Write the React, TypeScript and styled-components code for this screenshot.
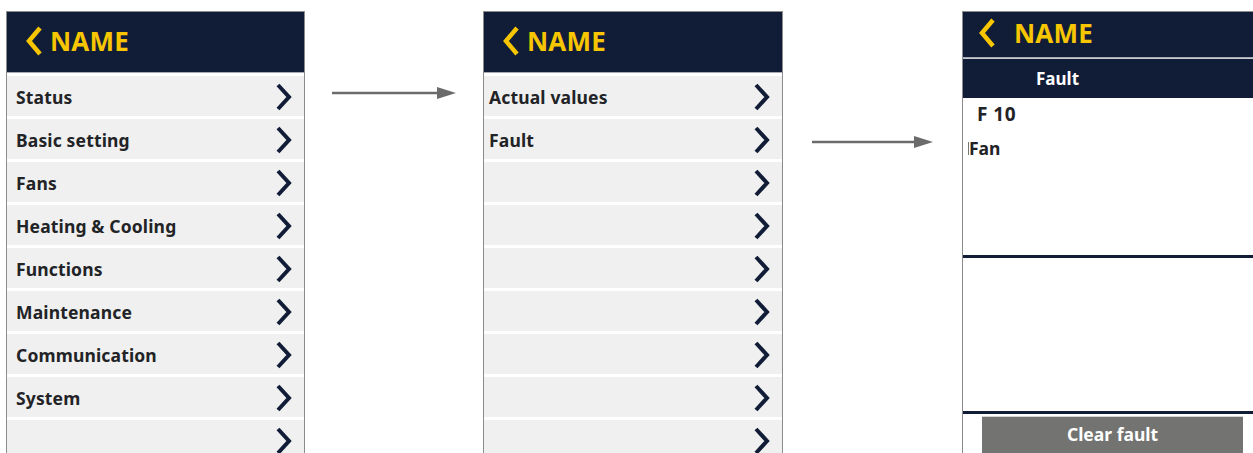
import React from "react";
import styled, { createGlobalStyle } from "styled-components";

const NAVY = "#111d37";
const YELLOW = "#f7c600";

const GlobalStyle = createGlobalStyle`
  body {
    margin: 0;
    background: #ffffff;
    font-family: "Noto Sans", "Open Sans", sans-serif;
    overflow: hidden;
  }
`;

const Page = styled.div`
  display: flex;
  align-items: flex-start;
  padding: 11px 0 0 6px;
  height: 453px;
  overflow: hidden;
  width: 1253px;
  box-sizing: border-box;
`;

const Panel = styled.div<{ $width: number }>`
  flex: none;
  width: ${(p) => p.$width}px;
  height: 442px;
  box-sizing: border-box;
  border: 1px solid #8c8c8c;
  border-bottom: none;
  display: flex;
  flex-direction: column;
  overflow: hidden;
`;

const Header = styled.div<{ $height: number; $gap: number; $pad: number }>`
  height: ${(p) => p.$height}px;
  flex: none;
  background: ${NAVY};
  display: flex;
  align-items: center;
  column-gap: ${(p) => p.$gap}px;
  padding-left: ${(p) => p.$pad}px;
  padding-bottom: 3px;
  box-sizing: border-box;
  border-bottom: 1px solid #a5aab3;
`;

const Title = styled.span`
  color: ${YELLOW};
  font-size: 26px;
  font-weight: 700;
  letter-spacing: 0.2px;
  line-height: 1;
`;

const List = styled.div`
  display: flex;
  flex-direction: column;
`;

const Row = styled.div<{ $pad: number }>`
  height: 40px;
  margin-top: 3px;
  flex: none;
  background: #eff0ef;
  display: flex;
  align-items: center;
  justify-content: space-between;
  padding: 2px 12px 0 ${(p) => p.$pad}px;
  box-sizing: border-box;
`;

const RowLabel = styled.span`
  font-size: 17.5px;
  font-weight: 700;
  letter-spacing: 0.15px;
  color: #222326;
`;

const ArrowCol = styled.div<{ $width: number; $top: number; $left: number; $len: number }>`
  flex: none;
  width: ${(p) => p.$width}px;
  padding-left: ${(p) => p.$left}px;
  margin-top: ${(p) => p.$top}px;
  box-sizing: border-box;
  display: flex;
  svg {
    width: ${(p) => p.$len}px;
    height: 12px;
  }
`;

const SubBar = styled.div`
  height: 40px;
  flex: none;
  background: ${NAVY};
  border-top: 1px solid #c8ccd2;
  color: #ffffff;
  font-size: 17px;
  font-weight: 700;
  display: flex;
  align-items: center;
  padding-left: 73px;
  box-sizing: border-box;
`;

const FaultBody = styled.div`
  height: 157px;
  flex: none;
  padding: 3px 0 0 5px;
  box-sizing: border-box;
  display: flex;
  flex-direction: column;
  row-gap: 9px;
`;

const FaultCode = styled.div`
  font-size: 19px;
  font-weight: 700;
  color: #222326;
  padding-left: 9px;
  letter-spacing: 0.5px;
`;

const FaultName = styled.div`
  font-size: 17.5px;
  font-weight: 700;
  color: #222326;
  display: flex;
  align-items: center;
  &::before {
    content: "";
    width: 1px;
    height: 13px;
    background: #777;
  }
`;

const Divider = styled.div`
  height: 3px;
  flex: none;
  background: ${NAVY};
`;

const Blank = styled.div`
  height: 153px;
  flex: none;
`;

const ClearButton = styled.button`
  margin: 2px 0 0 19px;
  width: 261px;
  height: 40px;
  flex: none;
  border: none;
  border-top: 1px solid #d5d5d5;
  background: #737471;
  color: #ffffff;
  font-family: "Noto Sans", sans-serif;
  font-size: 17.5px;
  font-weight: 700;
  padding: 0 0 5px;
`;

const BackIcon = () => (
  <svg width="18" height="30" viewBox="0 0 18 30">
    <polyline
      points="15,2 4,15 15,28"
      fill="none"
      stroke={YELLOW}
      strokeWidth="4.5"
      strokeLinejoin="miter"
    />
  </svg>
);

const NextIcon = () => (
  <svg width="16" height="28" viewBox="0 0 16 28">
    <polyline
      points="2,2 13,14 2,26"
      fill="none"
      stroke={NAVY}
      strokeWidth="4"
      strokeLinejoin="miter"
    />
  </svg>
);

const Arrow = ({ len }: { len: number }) => (
  <svg viewBox={`0 0 ${len} 12`}>
    <line x1="0" y1="6" x2={len - 18} y2="6" stroke="#6b6b6b" strokeWidth="2.5" />
    <polygon points={`${len - 19},0 ${len},6 ${len - 19},12`} fill="#6b6b6b" />
  </svg>
);

const MenuPanel = ({
  items,
  textPad,
  width,
}: {
  items: string[];
  textPad: number;
  width: number;
}) => (
  <Panel $width={width}>
    <Header $height={61} $gap={7} $pad={18}>
      <BackIcon />
      <Title>NAME</Title>
    </Header>
    <List>
      {items.map((label, i) => (
        <Row key={i} $pad={textPad}>
          <RowLabel>{label}</RowLabel>
          <NextIcon />
        </Row>
      ))}
    </List>
  </Panel>
);

const mainMenu = [
  "Status",
  "Basic setting",
  "Fans",
  "Heating & Cooling",
  "Functions",
  "Maintenance",
  "Communication",
  "System",
  "",
];

const subMenu = ["Actual values", "Fault", "", "", "", "", "", "", ""];

export default function App() {
  return (
    <>
      <GlobalStyle />
      <Page>
        <MenuPanel items={mainMenu} textPad={9} width={299} />
        <ArrowCol $width={178} $top={76} $left={27} $len={124}>
          <Arrow len={124} />
        </ArrowCol>
        <MenuPanel items={subMenu} textPad={5} width={300} />
        <ArrowCol $width={179} $top={125} $left={29} $len={121}>
          <Arrow len={121} />
        </ArrowCol>
        <Panel $width={300}>
          <Header $height={46} $gap={18} $pad={15}>
            <BackIcon />
            <Title>NAME</Title>
          </Header>
          <SubBar>Fault</SubBar>
          <FaultBody>
            <FaultCode>F 10</FaultCode>
            <FaultName>Fan</FaultName>
          </FaultBody>
          <Divider />
          <Blank />
          <Divider />
          <ClearButton>Clear fault</ClearButton>
        </Panel>
      </Page>
    </>
  );
}
